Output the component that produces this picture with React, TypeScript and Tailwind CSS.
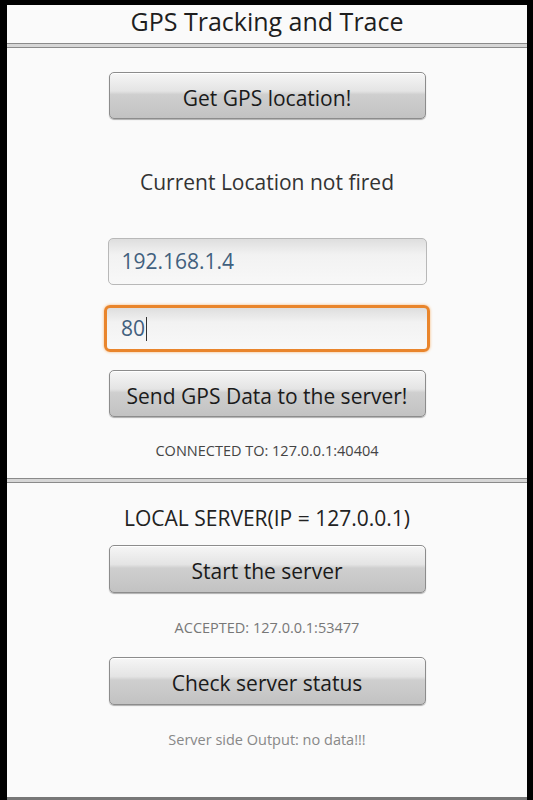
const font = { fontFamily: '"Open Sans", "Noto Sans", sans-serif' };

function Divider() {
  return (
    <div className="h-[5px] w-full border-y border-[#8a8a8a] bg-[#d6d6d6]" />
  );
}

function OldButton({ label, className = "" }: { label: string; className?: string }) {
  return (
    <button
      className={`mx-auto flex h-[47px] w-[317px] items-center justify-center rounded-[5px] border border-[#8c8c8c] bg-[linear-gradient(to_bottom,#f6f6f6_0%,#e4e4e4_40%,#cfcfcf_48%,#c2c2c2_100%)] pt-[6px] text-[21px] text-[#1a1a1a] shadow-[inset_0_1px_0_#ffffff,0_1px_1px_rgba(0,0,0,0.3)] ${className}`}
    >
      {label}
    </button>
  );
}

export default function App() {
  return (
    <div className="flex h-[800px] w-[533px] flex-col bg-black pl-[7px] pr-[6px] pt-[5px]" style={font}>
      <div className="flex flex-1 flex-col bg-[#fafafa]">
        {/* title bar */}
        <div className="flex h-[38px] items-center justify-center pb-[4px] text-[25px] text-[#1e1e1e]">
          GPS Tracking and Trace
        </div>
        <Divider />

        {/* client */}
        <OldButton label="Get GPS location!" className="mt-[24px]" />
        <p className="mt-[49px] text-center text-[21px] leading-[28px] text-[#333]">
          Current Location not fired
        </p>
        <div className="mx-auto mt-[42px] flex h-[47px] w-[319px] items-center rounded-[5px] border border-[#b8b8b8] bg-[linear-gradient(to_bottom,#dedede_0%,#f2f2f2_35%,#f8f8f8_100%)] px-[13px] text-[21px] text-[#41607e]">
          192.168.1.4
        </div>
        <div className="mx-auto mt-[20px] flex h-[47px] w-[326px] items-center rounded-[6px] border-[3px] border-[#e9852c] bg-[linear-gradient(to_bottom,#dedede_0%,#f2f2f2_35%,#f8f8f8_100%)] px-[14px] text-[21px] text-[#41607e] shadow-[0_0_3px_#f6b36e]">
          80<span className="ml-[1px] inline-block h-[24px] w-[1px] bg-[#333]" />
        </div>
        <OldButton label="Send GPS Data to the server!" className="mt-[18px]" />
        <p className="mt-[23px] text-center text-[14.5px] leading-[22px] text-[#444]">
          CONNECTED TO: 127.0.0.1:40404
        </p>
        <div className="mt-[16px]">
          <Divider />
        </div>

        {/* local server */}
        <p className="mt-[21px] text-center text-[21px] leading-[28px] text-[#222]">
          LOCAL SERVER(IP = 127.0.0.1)
        </p>
        <OldButton label="Start the server" className="mt-[13px] h-[48px]" />
        <p className="mt-[24px] text-center text-[14.5px] leading-[22px] text-[#777]">
          ACCEPTED: 127.0.0.1:53477
        </p>
        <OldButton label="Check server status" className="mt-[18px] h-[48px]" />
        <p className="mt-[24px] text-center text-[14.5px] leading-[22px] text-[#888]">
          Server side Output: no data!!!
        </p>
        <div className="flex-1" />
      </div>
      <div className="h-[3px] bg-[#777]" />
    </div>
  );
}
